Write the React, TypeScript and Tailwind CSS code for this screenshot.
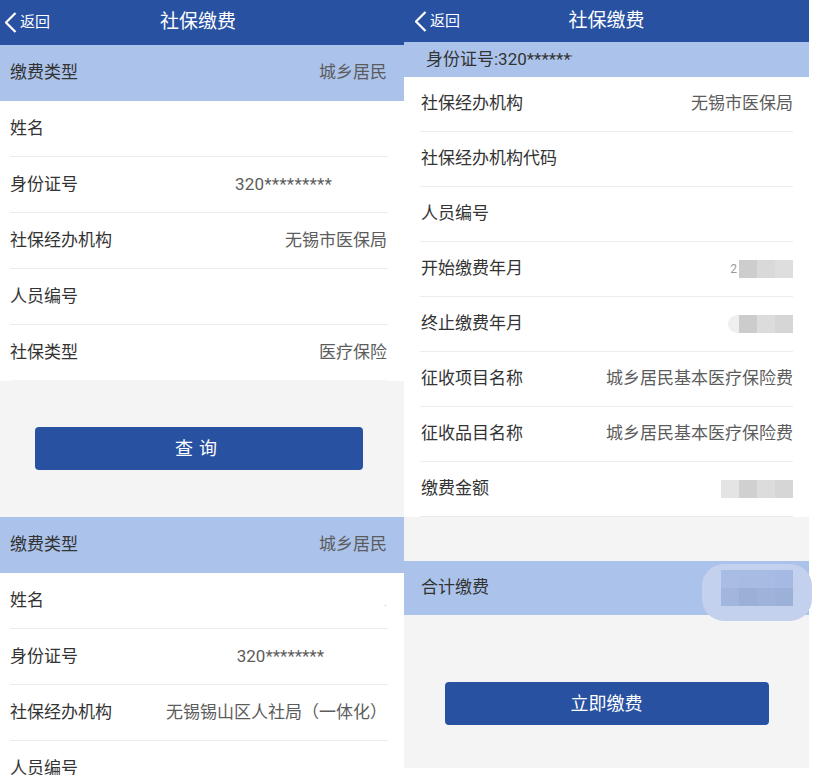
import type { ReactNode } from 'react';

const FONT = "font-[Roboto,'Noto_Sans_CJK_SC',sans-serif]";

function Chevron() {
  return (
    <svg width="13" height="21" viewBox="0 0 13 21" className="shrink-0">
      <path d="M11.5 1 L2 10.5 L11.5 20" fill="none" stroke="white" strokeWidth="2.2" strokeLinejoin="round" />
    </svg>
  );
}

function Header({ height, backPad, titleClass }: { height: string; backPad: string; titleClass: string }) {
  return (
    <div className={`grid shrink-0 grid-cols-[1fr_auto_1fr] items-center bg-[#2852a1] text-white ${height}`}>
      <div className={`flex items-center gap-[3px] ${backPad}`}>
        <Chevron />
        <span className="text-[15px]">返回</span>
      </div>
      <div className={`text-[19px] ${titleClass}`}>社保缴费</div>
      <div />
    </div>
  );
}

function Row({
  label,
  value,
  height = 'h-[55px]',
  pad = 'px-[10px]',
  valueClass = '',
  divider = true,
  line = 'mx-[10px] mr-[16px]',
}: {
  label: string;
  value?: ReactNode;
  height?: string;
  pad?: string;
  valueClass?: string;
  divider?: boolean;
  line?: string;
}) {
  return (
    <div className="shrink-0 bg-white">
      <div className={`flex items-center justify-between ${height} ${pad}`}>
        <span className="text-[17px] text-[#333]">{label}</span>
        {value != null && <span className={`text-[17px] text-[#5c5c5c] ${valueClass}`}>{value}</span>}
      </div>
      {divider && <div className={`h-px bg-[#ececec] ${line}`} />}
    </div>
  );
}

function BlueRow({ label, value, height, pad }: { label: string; value?: string; height: string; pad: string }) {
  return (
    <div className={`flex shrink-0 items-center justify-between bg-[#abc3eb] ${height} ${pad}`}>
      <span className="text-[17px] text-[#333]">{label}</span>
      {value && <span className="text-[17px] text-[#5c5c5c]">{value}</span>}
    </div>
  );
}

// pixelated (blurred) value blocks
function Blur({ colors }: { colors: string[][] }) {
  return (
    <div className="flex flex-col">
      {colors.map((r, i) => (
        <div key={i} className="flex">
          {r.map((c, j) => (
            <div key={j} className={`h-[18px] w-[18px] ${c}`} />
          ))}
        </div>
      ))}
    </div>
  );
}

function LeftPanel() {
  return (
    <div className="flex w-[404px] shrink-0 flex-col bg-[#f4f4f4] *:shrink-0">
      <Header height="h-[45px]" backPad="pl-[4px]" titleClass="pr-[8px]" />
      <BlueRow label="缴费类型" value="城乡居民" height="h-[56px]" pad="pl-[10px] pr-[17px]" />
      <Row label="姓名" pad="pl-[10px] pr-[17px]" />
      <Row label="身份证号" value="320*********" pad="pl-[10px] pr-[72px]" valueClass="tracking-[0.2px]" />
      <Row label="社保经办机构" value="无锡市医保局" pad="pl-[10px] pr-[17px]" />
      <Row label="人员编号" pad="pl-[10px] pr-[17px]" />
      <Row label="社保类型" value="医疗保险" pad="pl-[10px] pr-[17px]" line="mx-[10px] mr-[16px] opacity-50" />
      <div className="flex h-[136px] items-start justify-center pt-[46px]">
        <button className="ml-[-6px] h-[43px] w-[328px] rounded-[4px] bg-[#2852a1] text-[18px] tracking-[6px] text-white">
          查询
        </button>
      </div>
      <BlueRow label="缴费类型" value="城乡居民" height="h-[56px]" pad="pl-[10px] pr-[17px]" />
      <Row
        label="姓名"
        value={<span className="text-[10px] text-[#bbb]">.</span>}
        pad="pl-[10px] pr-[17px]"
      />
      <Row label="身份证号" value="320********" pad="pl-[10px] pr-[80px]" />
      <Row label="社保经办机构" value="无锡锡山区人社局（一体化）" pad="pl-[10px] pr-[17px]" />
      <Row label="人员编号" pad="pl-[10px] pr-[17px]" />
    </div>
  );
}

function RightPanel() {
  const rp = 'pl-[17px] pr-[16px]';
  const ln = 'mx-[16px]';
  return (
    <div className="flex w-[405px] shrink-0 flex-col self-start bg-[#f4f4f4] pb-[43px]">
      <Header height="h-[42px]" backPad="pl-[10px]" titleClass="" />
      <div className="flex h-[35px] shrink-0 items-center bg-[#abc3eb] pl-[22px] text-[17px] text-[#333]">
        身份证号:320******<span className="text-[9px] text-[#666]">ʼ</span>
      </div>
      <Row label="社保经办机构" value="无锡市医保局" height="h-[54px]" pad={rp} line={ln} />
      <Row label="社保经办机构代码" height="h-[54px]" pad={rp} line={ln} />
      <Row label="人员编号" height="h-[54px]" pad={rp} line={ln} />
      <Row
        label="开始缴费年月"
        height="h-[54px]"
        pad={rp}
        line={ln}
        value={
          <span className="flex items-center gap-[2px]">
            <span className="text-[12px] text-[#999]">2</span>
            <Blur colors={[['bg-[#cdcdcd]', 'bg-[#d9d9d9]', 'bg-[#dedede]']]} />
          </span>
        }
      />
      <Row
        label="终止缴费年月"
        height="h-[54px]"
        pad={rp}
        line={ln}
        value={
          <span className="flex items-center">
            <span className="h-[18px] w-[11px] rounded-l-full bg-[#efefef]" />
            <Blur colors={[['bg-[#cccccc]', 'bg-[#dcdcdc]', 'bg-[#d6d6d6]']]} />
          </span>
        }
      />
      <Row label="征收项目名称" value="城乡居民基本医疗保险费" height="h-[54px]" pad={rp} line={ln} />
      <Row label="征收品目名称" value="城乡居民基本医疗保险费" height="h-[54px]" pad={rp} line={ln} />
      <Row
        label="缴费金额"
        height="h-[54px]"
        pad={rp}
        line={ln}
        value={<Blur colors={[['bg-[#e4e4e4]', 'bg-[#d0d0d0]', 'bg-[#dcdcdc]', 'bg-[#d6d6d6]']]} />}
      />
      <div className="h-[44px] shrink-0" />
      <div className="relative flex h-[54px] shrink-0 items-center justify-between bg-[#abc3eb] pl-[17px] pr-[16px]">
        <span className="text-[17px] text-[#333]">合计缴费</span>
        <div className="absolute right-[-3px] top-[3px] h-[57px] w-[110px] rounded-[22px] bg-[#c3d1ee]" />
        <div className="relative">
          <Blur
            colors={[
              ['bg-[#a8bce4]', 'bg-[#a7bbe3]', 'bg-[#a7bbe3]', 'bg-[#a5b9e2]'],
              ['bg-[#a2b5dc]', 'bg-[#9bb0d6]', 'bg-[#9fb3da]', 'bg-[#9cb1d8]'],
            ]}
          />
        </div>
      </div>
      <div className="flex justify-center pt-[67px]">
        <button className="h-[43px] w-[324px] rounded-[4px] bg-[#2852a1] text-[18px] text-white">立即缴费</button>
      </div>
    </div>
  );
}

export default function App() {
  return (
    <div className={`flex h-[775px] w-[817px] overflow-hidden bg-white ${FONT}`}>
      <LeftPanel />
      <RightPanel />
    </div>
  );
}
